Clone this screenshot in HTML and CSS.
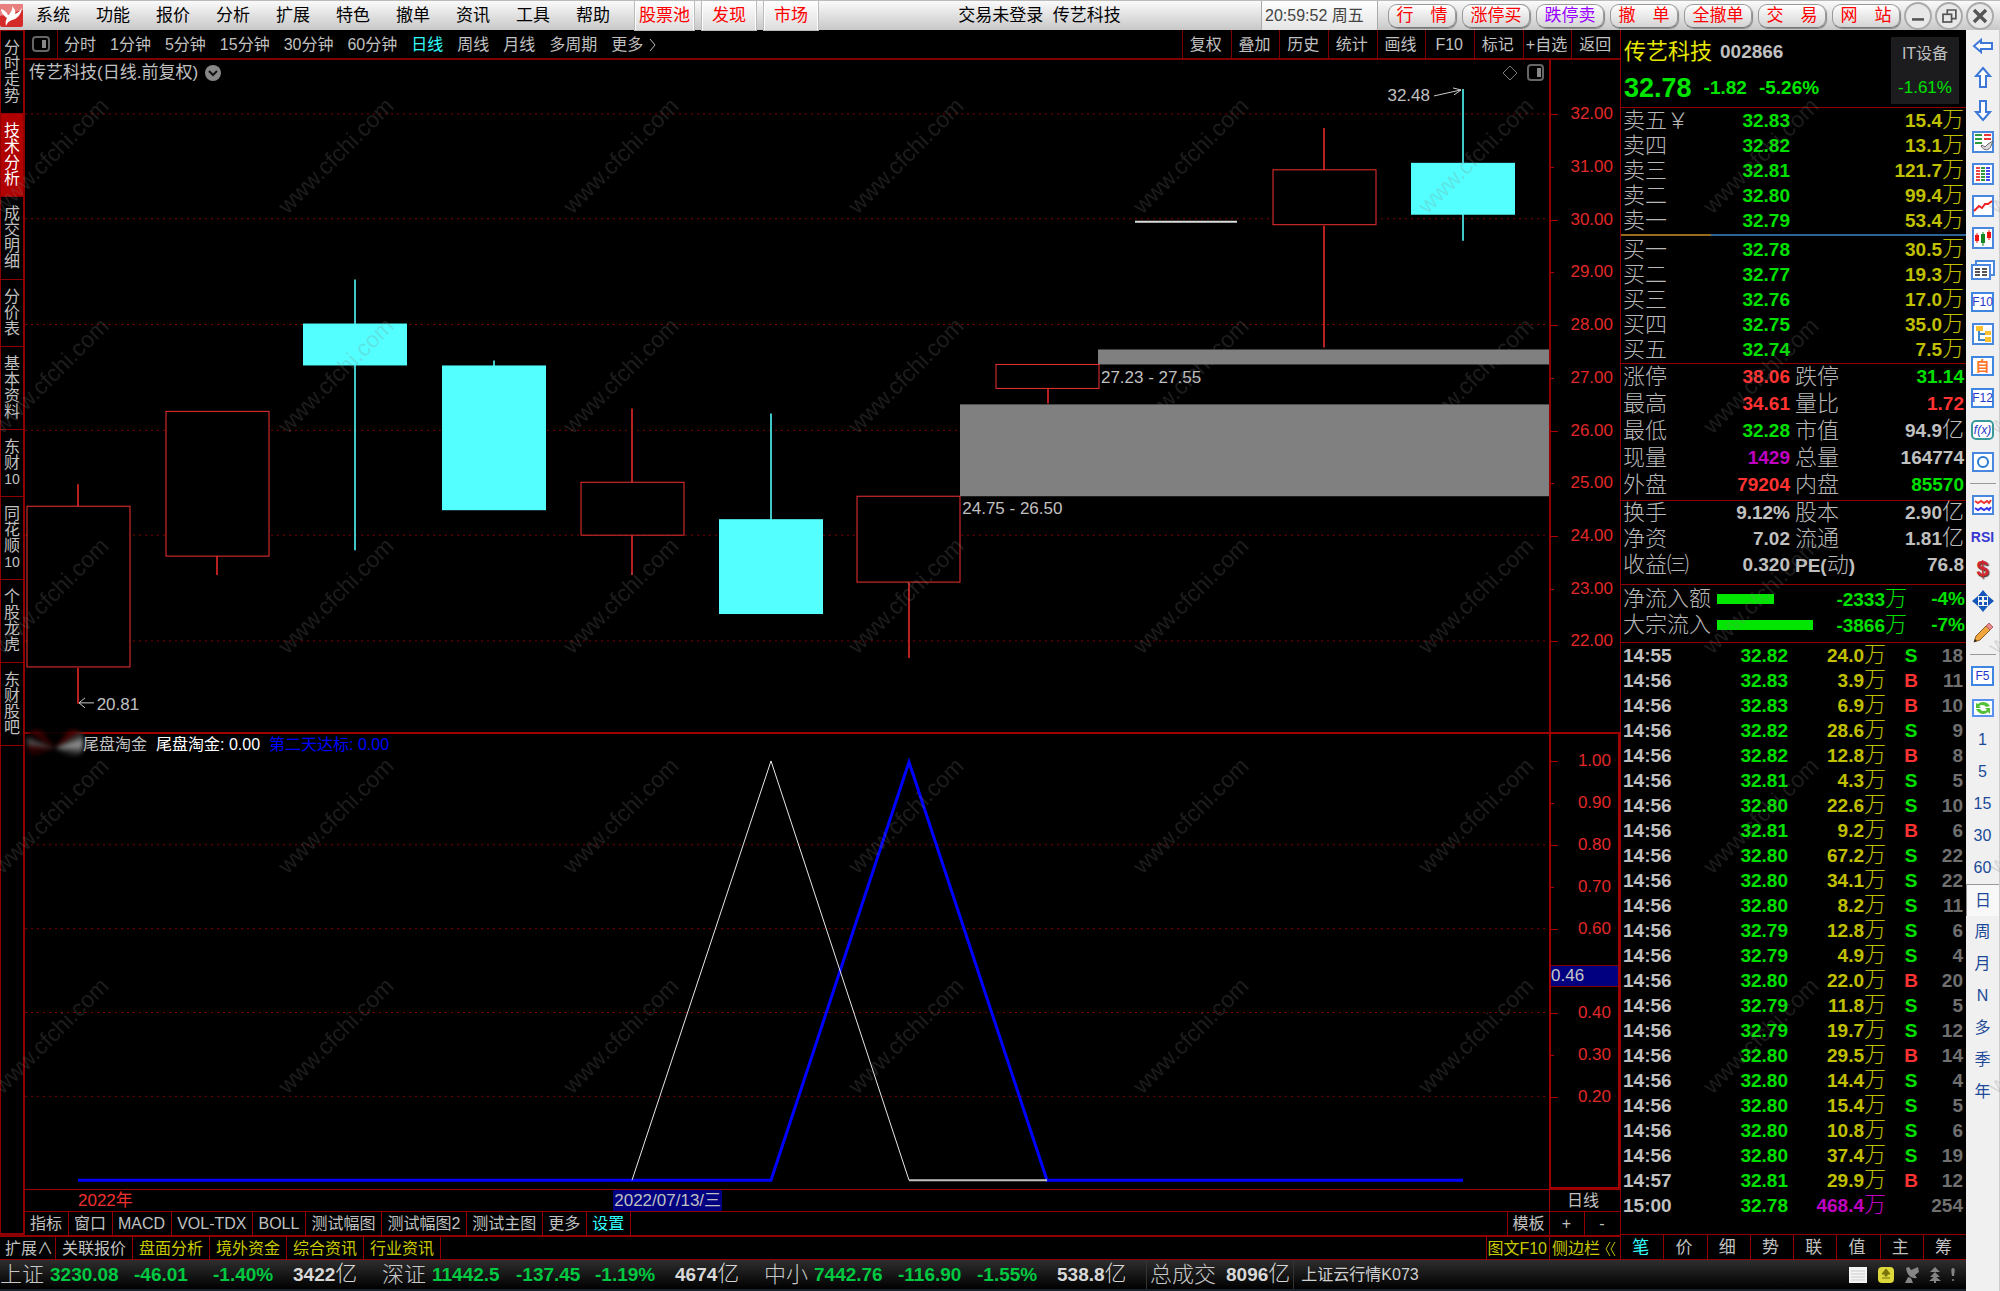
FILE: index.html
```html
<!DOCTYPE html>
<html lang="zh-CN">
<head>
<meta charset="utf-8">
<title>传艺科技 002866</title>
<link rel="stylesheet" href="styles.css">
</head>
<body>
<div class="app">
  <header class="menubar">
    <svg class="logo" viewBox="0 0 23 23" aria-hidden="true"><rect width="23" height="23" rx="2" fill="#d42a2a"/><path d="M0 2Q0 0 2 0H21Q23 0 23 2V6L0 12Z" fill="#e88080"/><path d="M1 5C5 6 7 9 8 11C11 9 13 5 12 2C15 5 16 8 15 10C18 9 20 7 22 4C21 11 17 15 12 16C9 17 7 19 6 22C5 18 6 16 7 14C4 12 1 9 1 5Z" fill="#fff"/></svg>
    <nav class="menu" aria-label="主菜单">
      <button>系统</button><button>功能</button><button>报价</button><button>分析</button><button>扩展</button><button>特色</button><button>撤单</button><button>资讯</button><button>工具</button><button>帮助</button>
    </nav>
    <div class="hot"><button>股票池</button><button>发现</button><button>市场</button></div>
    <h1 class="title">交易未登录&nbsp; 传艺科技</h1>
    <time class="clock">20:59:52 周五</time>
    <div class="pills">
      <button>行&emsp;情</button><button>涨停买</button><button class="violet">跌停卖</button><button>撤&emsp;单</button><button>全撤单</button><button>交&emsp;易</button><button>网&emsp;站</button>
    </div>
    <div class="winctl">
      <button aria-label="最小化"><svg viewBox="0 0 28 28"><path d="M7 18H21" stroke="#555" stroke-width="3"/></svg></button>
      <button aria-label="还原"><svg viewBox="0 0 28 28" fill="none" stroke="#555" stroke-width="2"><path d="M12 12V7H22V17H17"/><rect x="7" y="12" width="10" height="9"/></svg></button>
      <button aria-label="关闭"><svg viewBox="0 0 28 28"><path d="M7 7L21 21M21 7L7 21" stroke="#555" stroke-width="4"/></svg></button>
    </div>
  </header>

  <div class="body">
    <div class="work">
      <div class="upper">
        <div class="left">
          <div class="stage">
            <nav class="side" aria-label="页面">
              <button>分时走势</button><button class="on">技术分析</button><button>成交明细</button><button>分价表</button><button>基本资料</button><button>东财<span>10</span></button><button>同花顺<span>10</span></button><button>个股龙虎</button><button>东财股吧</button>
            </nav>
            <main class="chart">
              <div class="periods">
                <button class="panelbtn" aria-label="侧栏"><svg viewBox="0 0 18 16"><rect x="1" y="1" width="16" height="14" rx="3" fill="none" stroke="#666" stroke-width="2"/><rect x="10" y="4" width="4" height="8" fill="#888"/></svg></button>
                <div class="plist">
                  <button>分时</button><button>1分钟</button><button>5分钟</button><button>15分钟</button><button>30分钟</button><button>60分钟</button><button class="on">日线</button><button>周线</button><button>月线</button><button>多周期</button><button class="more">更多<svg viewBox="0 0 8 14"><path d="M1 1L6 7L1 13" fill="none" stroke="#bbb"/></svg></button>
                </div>
                <div class="ops"><button>复权</button><button>叠加</button><button>历史</button><button>统计</button><button>画线</button><button>F10</button><button>标记</button><button>+自选</button><button>返回</button></div>
              </div>

              <section class="pane price">
                <div class="plot">
                  <svg class="draw" viewBox="25 59 1524 673" preserveAspectRatio="none" aria-hidden="true">
                    <g class="grid"><path d="M25 113H1549M25 218H1549M25 324H1549M25 430H1549M25 535H1549M25 641H1549"/></g>
                    <g fill="#808080"><rect x="1098" y="349" width="451" height="15"/><rect x="960" y="404" width="589" height="92"/></g>
                    <g class="wick up"><path d="M78 484V506M78 668V704M217 556V575M632 408V482M632 535V575M909 583V658M1048 388V403M1324 127V169M1324 225V347"/></g>
                    <g class="body-up"><rect x="27" y="506" width="103" height="161"/><rect x="166" y="411" width="103" height="145"/><rect x="581" y="482" width="103" height="53"/><rect x="857" y="496" width="103" height="86"/><rect x="996" y="364" width="103" height="24"/><rect x="1273" y="169" width="103" height="55"/></g>
                    <g class="wick down"><path d="M355 279V550M494 360V370M771 413V520M1463 88V240"/></g>
                    <g fill="#54ffff"><rect x="303" y="323" width="104" height="42"/><rect x="442" y="365" width="104" height="145"/><rect x="719" y="519" width="104" height="95"/><rect x="1411" y="162" width="104" height="52"/></g>
                    <path d="M1135 221H1237" stroke="#ddd" stroke-width="2"/>
                    <g fill="none" stroke="#ccc"><path d="M79 703H94M85 698L79 703L85 708"/><path d="M1434 95L1461 89M1453 87L1461 89L1454 94"/></g>
                  </svg>
                  <div class="caption">传艺科技(日线.前复权)<svg viewBox="0 0 18 18" aria-hidden="true"><circle cx="9" cy="9" r="8" fill="#888"/><path d="M5 7L9 11L13 7" fill="none" stroke="#111" stroke-width="2"/></svg></div>
                  <div class="corner"><svg viewBox="0 0 16 18"><path d="M8 2L15 9L8 16L1 9Z" fill="none" stroke="#777"/></svg><svg viewBox="0 0 18 18"><rect x="1" y="1" width="15" height="15" rx="3" fill="none" stroke="#666" stroke-width="2"/><rect x="10" y="4" width="4" height="9" fill="#888"/></svg></div>
                  <span class="tag" style="left:89.4%;top:5.4%">32.48</span>
                  <span class="tag" style="left:70.6%;top:47.3%">27.23 - 27.55</span>
                  <span class="tag" style="left:61.5%;top:66.9%">24.75 - 26.50</span>
                  <span class="tag" style="left:4.7%;top:96%">20.81</span>
                </div>
                <div class="axis price-axis"><span>32.00</span><span>31.00</span><span>30.00</span><span>29.00</span><span>28.00</span><span>27.00</span><span>26.00</span><span>25.00</span><span>24.00</span><span>23.00</span><span>22.00</span></div>
              </section>

              <section class="pane indicator">
                <div class="plot">
                  <svg class="draw" viewBox="25 733 1524 456" preserveAspectRatio="none" aria-hidden="true">
                    <g class="grid"><path d="M25 844H1549M25 928H1549M25 1012H1549M25 1096H1549"/></g>
                    <path d="M78 1180H771L909 761L1047 1180H1463" fill="none" stroke="#0000ff" stroke-width="3"/>
                    <path d="M632 1180L771 760L909 1180" fill="none" stroke="#e8e8e8"/><path d="M909 1180H1047" stroke="#c0c0c0" stroke-width="2"/>
                  </svg>
                  <div class="smudge" aria-hidden="true"></div>
                  <div class="legend"><span>尾盘淘金</span><span class="white">尾盘淘金: 0.00</span><span class="blue">第二天达标: 0.00</span></div>
                </div>
                <div class="axis ind-axis"><span>1.00</span><span>0.90</span><span>0.80</span><span>0.70</span><span>0.60</span><span></span><span>0.40</span><span>0.30</span><span>0.20</span><b class="cursor">0.46</b></div>
              </section>

              <div class="dates"><div class="dateline"><span class="year">2022年</span><span class="picked">2022/07/13/三</span></div><span class="unit">日线</span></div>
              <div class="tabs">
                <button>指标</button><button>窗口</button><button>MACD</button><button>VOL-TDX</button><button>BOLL</button><button>测试幅图</button><button>测试幅图2</button><button>测试主图</button><button>更多</button><button class="on">设置</button>
                <div class="tools"><button class="tpl">模板</button><button class="pm">+</button><button class="pm">-</button></div>
              </div>
            </main>
          </div>
          <div class="ext">
            <button class="plain grow">扩展∧</button><button class="plain">关联报价</button><button>盘面分析</button><button>境外资金</button><button>综合资讯</button><button>行业资讯</button>
            <div class="tools"><button class="f10">图文F10</button><button class="bar">侧边栏<svg viewBox="0 0 12 16"><path d="M6 1L2 8L6 15M11 1L7 8L11 15" fill="none" stroke="#c0c000"/></svg></button></div>
          </div>
        </div>

        <aside class="quote">
          <div class="qhead">
            <div>
              <p class="qname"><strong>传艺科技</strong><span>002866</span></p>
              <p class="qprice"><strong>32.78</strong><span>-1.82</span><span>-5.26%</span></p>
            </div>
            <div class="sector"><span>IT设备</span><span class="g">-1.61%</span></div>
          </div>
          <table class="book" aria-label="卖盘"><colgroup><col class="c1"><col class="c2"><col></colgroup><tbody>
            <tr><th>卖五￥</th><td class="g">32.83</td><td class="y">15.4<i>万</i></td></tr>
            <tr><th>卖四</th><td class="g">32.82</td><td class="y">13.1<i>万</i></td></tr>
            <tr><th>卖三</th><td class="g">32.81</td><td class="y">121.7<i>万</i></td></tr>
            <tr><th>卖二</th><td class="g">32.80</td><td class="y">99.4<i>万</i></td></tr>
            <tr><th>卖一</th><td class="g">32.79</td><td class="y">53.4<i>万</i></td></tr>
          </tbody></table>
          <div class="ratio"><span></span></div>
          <table class="book" aria-label="买盘"><colgroup><col class="c1"><col class="c2"><col></colgroup><tbody>
            <tr><th>买一</th><td class="g">32.78</td><td class="y">30.5<i>万</i></td></tr>
            <tr><th>买二</th><td class="g">32.77</td><td class="y">19.3<i>万</i></td></tr>
            <tr><th>买三</th><td class="g">32.76</td><td class="y">17.0<i>万</i></td></tr>
            <tr><th>买四</th><td class="g">32.75</td><td class="y">35.0<i>万</i></td></tr>
            <tr><th>买五</th><td class="g">32.74</td><td class="y">7.5<i>万</i></td></tr>
          </tbody></table>
          <table class="stats" aria-label="行情"><colgroup><col class="c1"><col class="c2"><col class="c1"><col></colgroup><tbody>
            <tr><th>涨停</th><td class="r">38.06</td><th>跌停</th><td class="g">31.14</td></tr>
            <tr><th>最高</th><td class="r">34.61</td><th>量比</th><td class="r">1.72</td></tr>
            <tr><th>最低</th><td class="g">32.28</td><th>市值</th><td>94.9<i>亿</i></td></tr>
            <tr><th>现量</th><td class="m">1429</td><th>总量</th><td>164774</td></tr>
            <tr><th>外盘</th><td class="r">79204</td><th>内盘</th><td class="g">85570</td></tr>
          </tbody></table>
          <table class="stats funda" aria-label="基本面"><colgroup><col class="c1"><col class="c2"><col class="c1"><col></colgroup><tbody>
            <tr><th>换手</th><td>9.12%</td><th>股本</th><td>2.90<i>亿</i></td></tr>
            <tr><th>净资</th><td>7.02</td><th>流通</th><td>1.81<i>亿</i></td></tr>
            <tr><th>收益㈢</th><td>0.320</td><th><b>PE(</b>动<b>)</b></th><td>76.8</td></tr>
          </tbody></table>
          <div class="flows">
            <div class="flow"><span class="lab">净流入额</span><span class="track"><span style="width:57%"></span></span><span class="val">-2333<i>万</i></span><span class="val">-4%</span></div>
            <div class="flow"><span class="lab">大宗流入</span><span class="track"><span style="width:96%"></span></span><span class="val">-3866<i>万</i></span><span class="val">-7%</span></div>
          </div>
          <div class="tickbox">
          <table class="ticks" aria-label="分笔成交"><colgroup><col class="t1"><col class="t2"><col class="t3"><col class="t4"><col></colgroup><tbody>
            <tr><td>14:55</td><td>32.82</td><td>24.0<i>万</i></td><td class="g">S</td><td>18</td></tr>
            <tr><td>14:56</td><td>32.83</td><td>3.9<i>万</i></td><td class="r">B</td><td>11</td></tr>
            <tr><td>14:56</td><td>32.83</td><td>6.9<i>万</i></td><td class="r">B</td><td>10</td></tr>
            <tr><td>14:56</td><td>32.82</td><td>28.6<i>万</i></td><td class="g">S</td><td>9</td></tr>
            <tr><td>14:56</td><td>32.82</td><td>12.8<i>万</i></td><td class="r">B</td><td>8</td></tr>
            <tr><td>14:56</td><td>32.81</td><td>4.3<i>万</i></td><td class="g">S</td><td>5</td></tr>
            <tr><td>14:56</td><td>32.80</td><td>22.6<i>万</i></td><td class="g">S</td><td>10</td></tr>
            <tr><td>14:56</td><td>32.81</td><td>9.2<i>万</i></td><td class="r">B</td><td>6</td></tr>
            <tr><td>14:56</td><td>32.80</td><td>67.2<i>万</i></td><td class="g">S</td><td>22</td></tr>
            <tr><td>14:56</td><td>32.80</td><td>34.1<i>万</i></td><td class="g">S</td><td>22</td></tr>
            <tr><td>14:56</td><td>32.80</td><td>8.2<i>万</i></td><td class="g">S</td><td>11</td></tr>
            <tr><td>14:56</td><td>32.79</td><td>12.8<i>万</i></td><td class="g">S</td><td>6</td></tr>
            <tr><td>14:56</td><td>32.79</td><td>4.9<i>万</i></td><td class="g">S</td><td>4</td></tr>
            <tr><td>14:56</td><td>32.80</td><td>22.0<i>万</i></td><td class="r">B</td><td>20</td></tr>
            <tr><td>14:56</td><td>32.79</td><td>11.8<i>万</i></td><td class="g">S</td><td>5</td></tr>
            <tr><td>14:56</td><td>32.79</td><td>19.7<i>万</i></td><td class="g">S</td><td>12</td></tr>
            <tr><td>14:56</td><td>32.80</td><td>29.5<i>万</i></td><td class="r">B</td><td>14</td></tr>
            <tr><td>14:56</td><td>32.80</td><td>14.4<i>万</i></td><td class="g">S</td><td>4</td></tr>
            <tr><td>14:56</td><td>32.80</td><td>15.4<i>万</i></td><td class="g">S</td><td>5</td></tr>
            <tr><td>14:56</td><td>32.80</td><td>10.8<i>万</i></td><td class="g">S</td><td>6</td></tr>
            <tr><td>14:56</td><td>32.80</td><td>37.4<i>万</i></td><td class="g">S</td><td>19</td></tr>
            <tr><td>14:57</td><td>32.81</td><td>29.9<i>万</i></td><td class="r">B</td><td>12</td></tr>
            <tr><td>15:00</td><td>32.78</td><td class="m">468.4<i>万</i></td><td></td><td>254</td></tr>
          </tbody></table>
          </div>
          <nav class="qtabs" aria-label="侧边栏"><button class="on">笔</button><button>价</button><button>细</button><button>势</button><button>联</button><button>值</button><button>主</button><button>筹</button></nav>
        </aside>
      </div>

      <footer class="status">
        <div class="index"><span class="nm">上证</span><b>3230.08</b><b>-46.01</b><b>-1.40%</b><b class="amt">3422<i>亿</i></b></div>
        <div class="index"><span class="nm">深证</span><b>11442.5</b><b>-137.45</b><b>-1.19%</b><b class="amt">4674<i>亿</i></b></div>
        <div class="index"><span class="nm">中小</span><b>7442.76</b><b>-116.90</b><b>-1.55%</b><b class="amt">538.8<i>亿</i></b></div>
        <div class="total"><span class="nm">总成交</span><b class="amt">8096<i>亿</i></b></div>
        <span class="host">上证云行情K073</span>
        <div class="tray" aria-hidden="true">
          <svg viewBox="0 0 20 18" width="20" height="18"><rect x="1" y="1" width="18" height="16" fill="#f4f4f4"/><path d="M3 5H17M3 8H17M3 11H17M3 14H17" stroke="#ccc"/></svg>
          <svg viewBox="0 0 18 18" width="18" height="18"><rect x="1" y="1" width="16" height="16" rx="4" fill="#dcd83c"/><path d="M9 3L13 8H10V10H8V8H5ZM5 12H13" fill="#77730a" stroke="#77730a"/></svg>
          <svg viewBox="0 0 16 18" width="16" height="18"><path d="M2 2L5 1L7 4L14 1L15 6L11 9L13 12C7 13 3 9 2 2ZM4 11L1 17H9L7 12Z" fill="#858585"/></svg>
          <svg viewBox="0 0 12 18" width="12" height="18"><path d="M6 1L11 6H1ZM6 6L11 11H1ZM6 10L12 15H7V17H5V15H0Z" fill="#858585"/></svg>
          <svg viewBox="0 0 6 18" width="6" height="18"><path d="M3 2C5 2 5 4 4 10H2C1 4 1 2 3 2Z" fill="#858585"/><circle cx="3" cy="14" r="1" fill="#858585"/></svg>
        </div>
      </footer>
    </div>

    <nav class="strip" aria-label="工具栏">
      <button aria-label="后退"><svg viewBox="0 0 24 24"><path d="M3 12L10 6V9H21V15H10V18Z" fill="#fff" stroke="#3d78d8" stroke-width="2"/></svg></button>
      <button aria-label="上一个"><svg viewBox="0 0 24 24"><path d="M12 2L19 10H15V21H9V10H5Z" fill="#fff" stroke="#3d78d8" stroke-width="2"/></svg></button>
      <button aria-label="下一个"><svg viewBox="0 0 24 24"><path d="M12 22L19 14H15V3H9V14H5Z" fill="#fff" stroke="#3d78d8" stroke-width="2"/></svg></button>
      <button aria-label="自选"><svg viewBox="0 0 24 24"><rect x="2" y="2" width="20" height="20" fill="#fff" stroke="#4a88e0" stroke-width="2"/><path d="M4 5H11M4 9H11M4 13H11" stroke="#2d9a3c" stroke-width="2"/><path d="M13 5H20M13 9H20" stroke="#e33" stroke-width="2"/><path d="M10 16C13 21 18 21 20 16L22 11L17 14L14 17L11 15Z" fill="#ddd" stroke="#666"/></svg></button>
      <button aria-label="行情表"><svg viewBox="0 0 24 24"><rect x="2" y="2" width="20" height="20" fill="#fff" stroke="#4a88e0" stroke-width="2"/><g stroke-width="4" stroke-dasharray="2 1"><path d="M7 5V20" stroke="#e44"/><path d="M12 5V20" stroke="#2d9a3c"/><path d="M17 5V20" stroke="#44e"/></g></svg></button>
      <button aria-label="分时图"><svg viewBox="0 0 24 24"><rect x="2" y="2" width="20" height="20" fill="#fff" stroke="#4a88e0" stroke-width="2"/><path d="M3 17L8 12L11 14L14 10H17L21 7" fill="none" stroke="#e22" stroke-width="2"/></svg></button>
      <button aria-label="K线图"><svg viewBox="0 0 24 24"><rect x="2" y="2" width="20" height="20" fill="#fff" stroke="#4a88e0" stroke-width="2"/><path d="M6 7V17M18 4V14" stroke="#e11"/><path d="M12 6V20" stroke="#182"/><path d="M4 9H8V15H4ZM16 6H20V12H16Z" fill="#e11"/><path d="M10 8H14V17H10Z" fill="#182"/></svg></button>
      <button aria-label="多窗口"><svg viewBox="0 0 24 24"><rect x="5" y="3" width="18" height="14" fill="#fff" stroke="#4a88e0" stroke-width="2"/><rect x="1" y="7" width="18" height="14" fill="#fff" stroke="#4a88e0" stroke-width="2"/><path d="M4 11H9M4 14H9M4 17H9M11 11H16M11 14H16M11 17H16" stroke="#555" stroke-width="2"/></svg></button>
      <button><span class="key">F10</span></button>
      <button aria-label="板块"><svg viewBox="0 0 24 24"><rect x="2" y="2" width="20" height="20" fill="#fff" stroke="#4a88e0" stroke-width="2"/><path d="M8 8V18H14M8 12H14" fill="none" stroke="#48c" stroke-width="2"/><path d="M5 4H12V9H5ZM14 9H20V13H14ZM14 15H20V20H14Z" fill="#ffc02e"/></svg></button>
      <button><span class="key orange">自</span></button>
      <button><span class="key">F12</span></button>
      <button><span class="key fx">f(x)</span></button>
      <button aria-label="刷新圈"><svg viewBox="0 0 24 24"><rect x="2" y="3" width="20" height="18" fill="#fff" stroke="#4a88e0" stroke-width="2"/><circle cx="12" cy="12" r="5" fill="none" stroke="#2a7ad0" stroke-width="2"/></svg></button>
      <hr>
      <button aria-label="叠加线"><svg viewBox="0 0 24 24"><rect x="2" y="3" width="20" height="18" fill="#fff" stroke="#4a88e0" stroke-width="2"/><path d="M4 8L7 10L10 8L13 10L16 8L18 10L20 7" fill="none" stroke="#e33" stroke-width="2"/><path d="M4 15L7 17L10 15L13 17L16 15L18 17L20 14" fill="none" stroke="#33e" stroke-width="2"/></svg></button>
      <button class="rsi">RSI</button>
      <button aria-label="资金" class="money">$</button>
      <button aria-label="移动"><svg viewBox="0 0 24 24" fill="#1656b8"><path d="M12 1L17 7H7ZM12 23L17 17H7ZM1 12L7 7V17ZM23 12L17 7V17ZM8 8H11V11H8ZM13 8H16V11H13ZM8 13H11V16H8ZM13 13H16V16H13Z"/></svg></button>
      <button aria-label="画线"><svg viewBox="0 0 24 24"><path d="M3 21L5 15L15 5L19 9L9 19Z" fill="#f0a63c" stroke="#8a5a20"/><path d="M15 5L18 2L22 6L19 9Z" fill="#e88" stroke="#a66"/><path d="M3 21L4 18L6 20Z" fill="#222"/></svg></button>
      <hr>
      <button><span class="key">F5</span></button>
      <button aria-label="刷新"><svg viewBox="0 0 24 24"><rect x="2" y="4" width="20" height="16" fill="#fff" stroke="#5a90ee" stroke-width="2"/><path d="M5 7L5 12H10L8 10C11 8 14 9 15 11L19 10C16 5 10 5 7 8ZM19 18V12H14L16 14C13 16 10 15 9 13L5 13C8 19 14 19 17 16Z" fill="#54c038"/></svg></button>
      <button>1</button><button>5</button><button>15</button><button>30</button><button>60</button>
      <button class="on">日</button><button>周</button><button>月</button><button>N</button><button>多</button><button>季</button><button>年</button>
    </nav>
  </div>

  <svg class="watermark" aria-hidden="true"><defs><pattern id="wm" x="-91" y="0" width="285" height="220" patternUnits="userSpaceOnUse"><text x="143" y="116" text-anchor="middle" transform="rotate(-45 143 110)">www.cfchi.com</text></pattern></defs><rect width="100%" height="100%" fill="url(#wm)"/></svg>
</div>
</body>
</html>
```
FILE: styles.css
```css
* { box-sizing: border-box; }
body {
  margin: 0;
  background: #000;
  color: #c0c0c0;
  font: 16px/20px "Liberation Sans", "Noto Sans CJK SC", sans-serif;
}
button {
  margin: 0;
  padding: 0;
  border: 0;
  background: none;
  color: inherit;
  font: inherit;
  white-space: nowrap;
}
p, h1 { margin: 0; }
i { font-style: normal; }
svg { display: block; }
.app {
  position: relative;
  display: flex;
  flex-direction: column;
  min-height: 100vh;
  overflow: hidden;
}

/* menu bar */
.menubar {
  display: flex;
  align-items: center;
  height: 30px;
  background: linear-gradient(#fafafa, #c8c8c8);
  border-top: 1px solid #bbb;
  color: #000;
  font-size: 17px;
}
.logo { width: 23px; height: 23px; }
.menu { display: flex; }
.menu button { width: 60px; }
.hot { display: flex; gap: 8px; align-self: stretch; margin-left: 12px; color: #f00; }
.hot button { padding: 0 9px; background: linear-gradient(#fff, #ddd); border: solid #fff; border-width: 0 1px; outline: 1px solid #bbb; }
.hot button:first-child { padding: 0 3px; }
.title { flex: 1; text-align: center; font-size: 17px; font-weight: 400; }
.clock {
  align-self: stretch;
  width: 117px;
  padding: 0 3px;
  border: solid #aaa;
  border-width: 0 1px;
  background: linear-gradient(#fff, #e4e4e4);
  color: #444;
  font-size: 16px;
  line-height: 29px;
  white-space: nowrap;
}
.pills { display: flex; gap: 6px; margin-left: 10px; color: #f00; }
.pills button {
  width: 68px;
  height: 24px;
  border-radius: 9px;
  background: linear-gradient(#fff, #d4d4d4);
  border: 1px solid #999;
  border-bottom-color: #777;
  box-shadow: 1px 1px 1px #888;
}
.pills .violet { color: #90f; }
.winctl { display: flex; gap: 3px; margin: 0 6px 0 4px; }
.winctl button { width: 28px; height: 28px; border: 2px solid #aaa; border-radius: 50%; background: #e8e8e8; }
.winctl svg { width: 24px; height: 24px; }

/* main split */
.body { flex: 1; display: flex; }
.work { flex: 1; min-width: 0; display: flex; flex-direction: column; }
.upper { flex: 1; display: flex; }
.left { flex: 1; min-width: 0; display: flex; flex-direction: column; }
.stage { flex: 1; display: flex; }
.side {
  width: 25px;
  border: solid #900000;
  border-width: 1px 2px 2px 1px;
}
.side button {
  display: block;
  width: 100%;
  padding: 9px 3px;
  border-bottom: 1px solid #900000;
  line-height: 16px;
  white-space: normal;
  word-break: break-all;
}
.side .on { background: #b00000; color: #fff; }
.side span { display: block; font-size: 14px; white-space: nowrap; }
.chart { flex: 1; min-width: 0; display: flex; flex-direction: column; }

.periods { display: flex; height: 30px; border-bottom: 2px solid #800000; }
.panelbtn { width: 33px; padding-left: 7px; border-right: 1px solid #800000; }
.panelbtn svg { width: 18px; height: 16px; }
.plist { flex: 1; display: flex; gap: 14px; padding: 2px 0 0 6px; }
.plist .on, .tabs .on, .qtabs .on { color: #3ff; }
.more { display: flex; align-items: center; gap: 6px; }
.more svg { width: 8px; height: 14px; }
.ops { display: flex; width: 438px; }
.ops button { flex: 1; padding: 2px 2px 0 0; border-left: 1px solid #800000; }

/* chart panes */
.pane { display: flex; min-height: 0; }
.price { flex: 673 1 0; }
.indicator { flex: 456 1 0; border-top: 2px solid #a00000; }
.plot { position: relative; flex: 1; }
.draw { position: absolute; inset: 0; width: 100%; height: 100%; }
.grid { stroke: #800000; stroke-width: 1; stroke-dasharray: 2 4; }
.wick { stroke-width: 2; }
.wick.up { stroke: #b82020; }
.wick.down { stroke: #40c8c8; }
.body-up { fill: #000; stroke: #f03030; stroke-width: 1; shape-rendering: crispEdges; }
.caption {
  position: relative;
  display: flex;
  align-items: center;
  gap: 6px;
  padding: 3px 4px;
  font-size: 17px;
}
.caption svg { width: 18px; height: 18px; }
.corner { position: absolute; top: 4px; right: 4px; display: flex; gap: 8px; }
.corner svg { width: 18px; height: 18px; }
.tag { position: absolute; margin-top: -10px; font-size: 17px; white-space: nowrap; }
.axis {
  position: relative;
  display: flex;
  flex-direction: column;
  width: 71px;
  border-left: 2px solid #900000;
  color: #e02828;
  font-size: 17px;
}
.axis span {
  position: relative;
  flex: 1;
  display: flex;
  align-items: center;
  justify-content: flex-end;
  padding-right: 7px;
}
.axis span::before { content: ""; position: absolute; left: 0; top: 50%; width: 3px; height: 1px; background: #b00000; }
.axis span:nth-child(odd)::before { width: 7px; }
.price-axis { padding: 28px 0 64px; }
.ind-axis { padding: 6px 0 69px; border: solid #a00000; border-width: 0 2px 2px; }
.cursor {
  position: absolute;
  left: 0;
  right: 0;
  top: 51%;
  height: 22px;
  background: #000080;
  border: solid #800000;
  border-width: 1px 0;
  color: #c8c8c8;
  font-weight: 400;
}
.legend { position: relative; display: flex; gap: 9px; padding: 1px 0 0 58px; }
.white { color: #fff; }
.blue { color: #00f; }
.smudge {
  position: absolute;
  left: 2px;
  top: -4px;
  width: 56px;
  height: 26px;
  background: conic-gradient(from 0deg at 50% 70%, #000 0 30deg, #500 50deg, #222 60deg, #999 80deg, #222 105deg, #000 130deg 240deg, #300 270deg, #555 285deg, #000 295deg, #400 310deg, #000 330deg);
  border-radius: 8px;
  filter: blur(2px);
}
.dates { display: flex; height: 22px; border-top: 1px solid #a00000; font-size: 17px; }
.dateline { position: relative; flex: 1; display: flex; }
.year { margin-left: 53px; color: #f03030; }
.picked { position: absolute; left: 38.6%; padding: 0 1px; height: 21px; background: #000080; }
.unit { width: 71px; padding-right: 4px; border-left: 1px solid #a00000; text-align: center; font-size: 16px; line-height: 22px; }
.year, .picked { line-height: 22px; }
.tabs, .ext { display: flex; height: 25px; border-top: 1px solid #900000; }
.tabs { height: 24px; }
.tabs button, .ext button { padding: 0 6px; border-right: 1px solid #900000; }
.tabs button { padding-left: 5px; }
.tools { margin-left: auto; display: flex; border-left: 1px solid #900000; }
.tabs .tpl { width: 42px; padding: 0 4px; }
.tabs .pm { width: 35px; }
.tabs .pm:last-child, .ext .bar { border-right: 0; }
.ext { border-bottom: 1px solid #900000; border-top-width: 2px; color: #c8c800; }
.ext button { padding-top: 2px; }
.ext .plain { color: #c0c0c0; }
.ext .grow { padding: 2px 2px 0 5px; }
.ext .f10 { padding: 2px 2px 0 0; }
.ext .bar { width: 70px; padding: 2px 2px 0; display: flex; align-items: center; gap: 4px; }
.bar svg { width: 12px; height: 16px; }

/* quote panel */
.quote { width: 346px; display: flex; flex-direction: column; border-left: 1px solid #900000; }
.quote, .quote table { font-size: 19px; }
.g { color: #00e000; }
.y { color: #c0c000; }
.r { color: #ff3232; }
.m { color: #c000c0; }
.qhead { display: flex; justify-content: space-between; height: 78px; padding: 7px 7px 3px 3px; border-bottom: 1px solid #900000; }
.qname { display: flex; align-items: center; gap: 8px; height: 30px; font-weight: 700; }
.qname strong { color: #e8e800; font-size: 22px; font-weight: 400; }
.qprice { display: flex; align-items: center; gap: 12px; height: 42px; color: #00e600; font-weight: 700; }
.qprice strong { font-size: 27px; }
.sector { display: flex; flex-direction: column; gap: 14px; width: 68px; padding-top: 7px; background: #1c1c1f; text-align: center; font-size: 16px; }
.sector .g { font-size: 17px; }
table { width: 100%; border-collapse: collapse; table-layout: fixed; }
.c1 { width: 70px; }
.c2 { width: 99px; }
th, td { padding: 0; height: 25px; line-height: 24px; white-space: nowrap; }
th { text-align: left; font-weight: 300; font-size: 22px; color: #b8b8b8; padding-left: 2px; }
th b { font-size: 19px; font-weight: 700; color: #c0c0c0; }
td { text-align: right; font-weight: 700; }
td i, .val i, .amt i { font-size: 22px; font-weight: 300; line-height: 20px; }
td:last-child { padding-right: 2px; }
.ratio { height: 2px; margin: 1px 0; background: #2a6496; }
.ratio span { display: block; width: 26%; height: 2px; background: #966e1e; }
.stats { margin-top: 1px; border-top: 1px solid #900000; }
.stats th, .stats td { height: 27px; }
.stats th + td + th { padding-left: 5px; }
.funda { margin-top: 1px; }
.funda th, .funda td { height: 26px; }
.flows { margin-top: 6px; padding: 1px 0 4px; border: solid #900000; border-width: 1px 0; color: #00e000; }
.flow { display: grid; grid-template-columns: 96px 100px 1fr 58px; align-items: center; height: 26px; font-weight: 700; }
.lab { padding-left: 2px; color: #b8b8b8; font-size: 22px; font-weight: 300; }
.track span { display: block; height: 10px; background: #00e600; }
.val { text-align: right; padding-right: 1px; white-space: nowrap; }
.tickbox { flex: 1; min-height: 580px; }
.ticks td { color: #c0c0c0; }
.t1 { width: 70px; }
.t2 { width: 97px; }
.t3 { width: 98px; }
.t4 { width: 42px; }
.ticks td:first-child { text-align: left; padding-left: 2px; }
.ticks td:nth-child(2) { color: #00e000; }
.ticks td:nth-child(3) { color: #c0c000; }
.ticks td.m:nth-child(3) { color: #c000c0; }
.ticks td:nth-child(4) { text-align: center; padding-left: 8px; }
.ticks td:last-child { color: #707070; padding-right: 3px; }
.ticks td.g { color: #00e000; }
.ticks td.r { color: #ff3232; }
.qtabs { display: flex; height: 26px; border: solid #900000; border-width: 1px 0; font-size: 17px; }
.qtabs button { flex: 1; padding: 2px 3px 0 0; }
.qtabs button + button { border-left: 1px solid #900000; }

/* status bar */
.status {
  display: flex;
  align-items: center;
  height: 31px;
  background: linear-gradient(#2e2e2e, #000);
  border-bottom: 2px solid #16222c;
  color: #00c840;
  font-size: 19px;
  white-space: nowrap;
}
.index { display: grid; grid-template-columns: 50px 84px 79px 80px 89px; align-items: center; }
.nm { color: #c8c8c8; font-size: 22px; font-weight: 300; }
.amt { color: #d8d8d8; }
.total { display: flex; align-items: center; gap: 10px; height: 29px; padding: 0 3px; border: solid #333; border-width: 0 1px; }
.host { padding-left: 7px; color: #d0d0d0; font-size: 16px; }
.tray { display: flex; align-items: center; gap: 9px; margin-left: auto; padding-right: 10px; }

/* tool strip */
.strip {
  width: 34px;
  display: flex;
  flex-direction: column;
  background: #f0f0f0;
  border-right: 1px solid #ccc;
  color: #1c4a98;
  font-size: 16px;
}
.strip button { display: flex; align-items: center; justify-content: center; height: 32px; }
.strip svg { width: 24px; height: 24px; }
.strip hr { width: 26px; height: 1px; margin: 5px auto; border: 0; background: #999; }
.strip .on { background: #f8f8f8; border: solid #999; border-width: 1px 0 0 1px; }
.key { width: 23px; height: 20px; border: 2px solid #3f86e0; background: #fff; color: #2438c8; font-size: 12px; line-height: 16px; text-align: center; display: flex; justify-content: center; }
.orange { color: #ff7428; font-size: 14px; font-weight: 700; }
.fx { border-color: #3a9a9a; border-radius: 5px; font-style: italic; }
.strip .rsi { color: #3838d0; font-size: 14px; font-weight: 700; }
.strip .money { color: #d02830; font-size: 22px; font-weight: 700; text-shadow: 1px 1px 1px #333; }

.watermark { position: absolute; left: 0; top: 47px; width: 100%; height: 1100px; pointer-events: none; }
.watermark text { fill: #808080; fill-opacity: .22; font-size: 23px; }
```
